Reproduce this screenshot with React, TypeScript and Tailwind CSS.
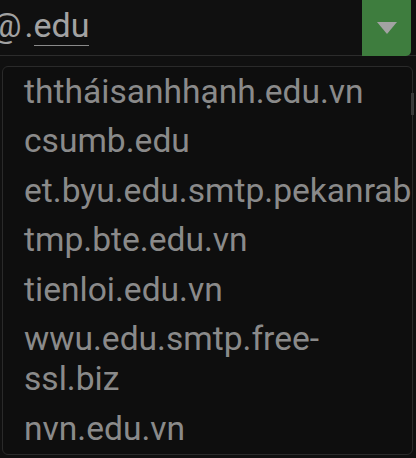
import React from "react";

const domains: string[] = [
  "ththáisanhhạnh.edu.vn",
  "csumb.edu",
  "et.byu.edu.smtp.pekanrabbit",
  "tmp.bte.edu.vn",
  "tienloi.edu.vn",
  "wwu.edu.smtp.free-ssl.biz",
  "nvn.edu.vn",
];

const App: React.FC = () => {
  return (
    <div
      className="relative w-[416px] h-[458px] overflow-hidden bg-[#101010]"
      style={{ fontFamily: "Roboto, 'Noto Sans', sans-serif" }}
    >
      {/* input row */}
      <div className="flex h-[56px] border-b border-[#2c2c2c]">
        <div className="flex-1 overflow-hidden">
          <div className="-ml-[9px] pt-[5px] text-[34px] leading-[40px] text-[#a2a2a2] whitespace-nowrap">
            @<span className="ml-[3px]">.</span>
            <span className="border-b border-[#8a8a8a]">edu</span>
          </div>
        </div>
        <button className="w-[49px] h-[56px] mr-[5px] bg-[#3e7d3e] rounded-br-[5px] flex items-center justify-center">
          <svg width="20" height="12" viewBox="0 0 20 12">
            <path d="M0 0 L20 0 L10 12 Z" fill="#a3a3a3" />
          </svg>
        </button>
      </div>

      {/* dropdown list */}
      <div className="absolute left-[2px] top-[66px] w-[411px] h-[389px] rounded-[6px] border border-[#2a2a2a] bg-[#0e0e0e] overflow-hidden">
        <ul>
          {domains.map((d) => (
            <li
              key={d}
              className="pl-[21px] py-[4.75px] text-[33.6px] leading-[40px] text-[#8a8a8a] whitespace-nowrap"
            >
              {d === "wwu.edu.smtp.free-ssl.biz" ? (
                <>
                  wwu.edu.smtp.free-
                  <br />
                  ssl.biz
                </>
              ) : (
                d
              )}
            </li>
          ))}
        </ul>
      </div>
      <div className="absolute left-[411px] top-[93px] w-[3px] h-[22px] bg-[#3a3a3a]" />
    </div>
  );
};

export default App;
